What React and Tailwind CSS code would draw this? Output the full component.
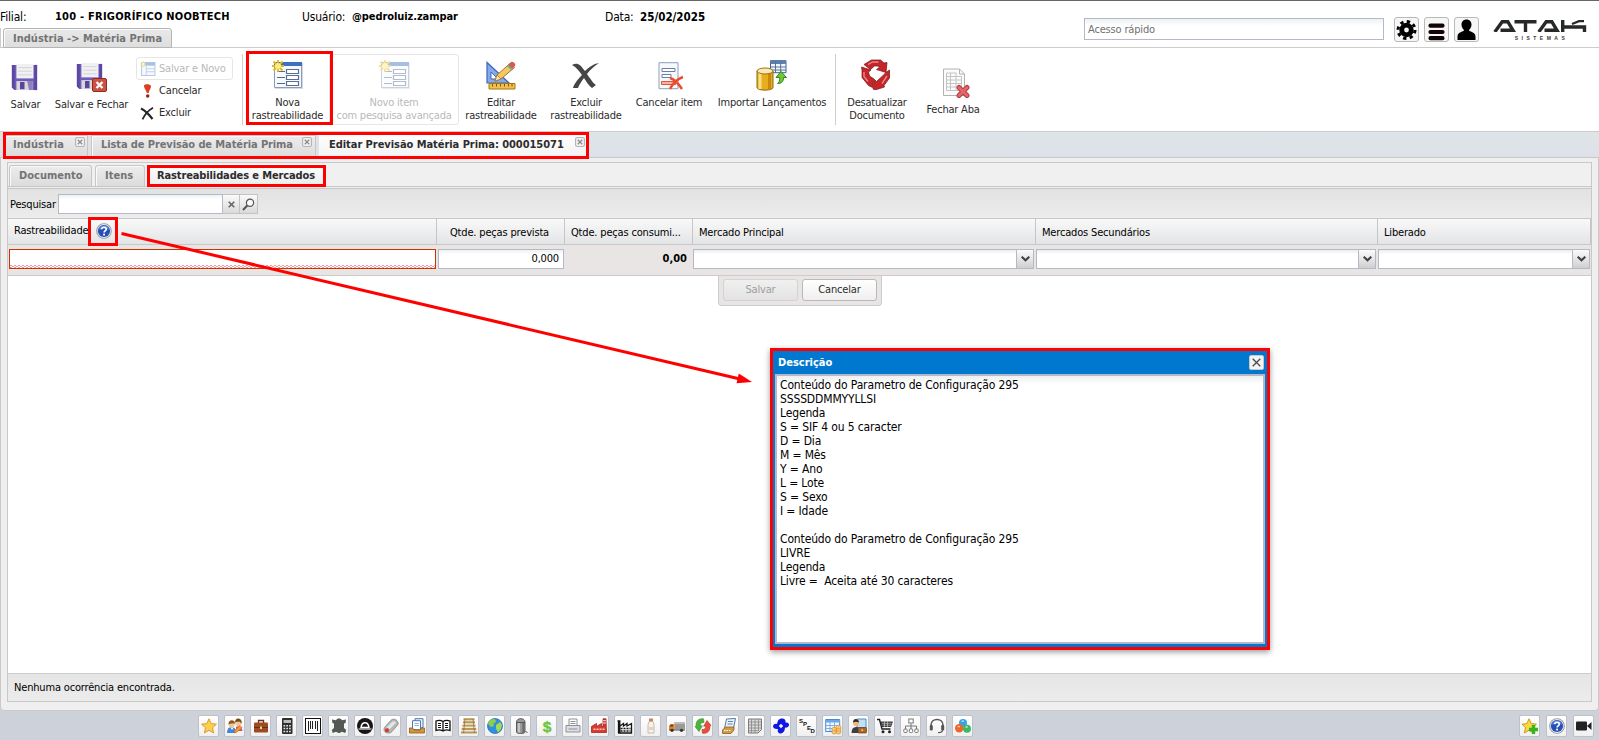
const Floppy = () => (
  <g>
    <path d="M1 1h28v28H4l-3-3z" fill="#6f5bb8" />
    <path d="M1 1h3v28l-3-3z" fill="#5a479f" />
    <path d="M26 1h3v28h-3z" fill="#5a479f" />
    <path d="M6 0h19v16H6z" fill="#f1f1f3" />
    <path d="M8 4h15M8 8h15M8 12h15" stroke="#cfcfd6" />
    <path d="M6 19h18v10H6z" fill="#d8d8dc" />
    <path d="M10 20h5v8h-5z" fill="#57469a" />
    <path d="M18 19h6v10h-4z" fill="#8d80bd" />
  </g>
);

const Burst = () => (
  <g>
    <path d="M6 0v12M0 6h12M1.500 1.500l9 9M10.500 1.500l-9 9" stroke="#e5b51c" strokeWidth="1.800" />
    <circle cx="6" cy="6" r="3" fill="#fdee7c" />
  </g>
);

const FormNew = () => (
  <svg className="h-[31px] w-[31px]" viewBox="0 0 31 31" fill="none">
    <path d="M3 3h28v26H3z" fill="#d5d9e0" />
    <path d="M2.500 2.500h27v25h-27z" fill="#f6f9fd" stroke="#8a9bb8" />
    <path d="M2 2h28v4H2z" fill="#3d6fc4" />
    <path d="M5 11.500h8M5 17.500h8M5 23.500h8" stroke="#5a6884" strokeWidth="1.200" />
    <path d="M14.500 9.500h12v4h-12zM14.500 15.500h12v4h-12zM14.500 21.500h12v4h-12z" fill="#fff" stroke="#5a6d96" strokeWidth="1.200" />
    <Burst />
  </svg>
);

function Tool({ w, label, label2, children, off, pad = "pt-[6px]" }) {
  return (
    <div className={`flex shrink-0 flex-col items-center tracking-[-0.21px] ${w} ${pad} ${off ? "text-[#b9b9b9]" : "text-[#2b2b2b]"}`}>
      <div className={`flex h-[31px] items-center justify-center ${off ? "opacity-45" : ""}`}>{children}</div>
      <div className="mt-[5px] text-center leading-[13px]">
        <div>{label}</div>
        {label2 && <div>{label2}</div>}
      </div>
    </div>
  );
}

function TabClose() {
  return (
    <svg className="h-[10px] w-[10px]" viewBox="0 0 9 9" fill="none">
      <rect x=".5" y=".5" width="8" height="8" rx="1.500" fill="#f1f1f1" stroke="#b4b4b4" />
      <path d="M2.500 2.500l4 4M6.500 2.500l-4 4" stroke="#8b8b8b" strokeWidth="1.100" />
    </svg>
  );
}

function HeaderBtn({ children }) {
  return (
    <div className="flex h-[25px] w-[25px] items-center justify-center rounded-[3px] border border-[#b9b9b9] bg-[#f6f6f6]">
      <svg className="h-[23px] w-[23px]" viewBox="0 0 23 23">{children}</svg>
    </div>
  );
}

function Combo({ w }) {
  return (
    <div className={`flex h-[20px] shrink-0 border border-[#b5b8c8] bg-white bg-linear-to-b from-[#e9eef0] to-white to-25% ${w}`}>
      <div className="flex-1" />
      <div className="flex w-[17px] items-center justify-center border-l border-[#b5b8c8] bg-linear-to-b from-[#fbfbfb] to-[#cfcfcf]">
        <svg className="h-[6px] w-[9px]" viewBox="0 0 9 6" fill="none"><path d="M.7.700L4.500 4.300 8.300.700" stroke="#3f3f3f" strokeWidth="2" /></svg>
      </div>
    </div>
  );
}

const Help = () => (
  <g>
    <circle cx="8" cy="8" r="7.800" fill="#8f959f" />
    <circle cx="8" cy="8" r="6.900" fill="#e3e7ee" />
    <circle cx="8" cy="8" r="6.100" fill="#2450b5" />
    <path d="M3 7a5 4.500 0 0 1 10 0c-3-2-7-2-10 0z" fill="#5b83dc" />
    <path d="M5.700 6.200c.2-2.600 4.700-2.600 4.600 0 0 1.500-2.200 1.500-2.200 3.200" stroke="#fff" strokeWidth="1.700" fill="none" />
    <circle cx="8.050" cy="11.600" r="1.050" fill="#fff" />
  </g>
);

const dock = [
  /* favourites */
  <path d="M8 .8l2.200 4.800 5.200.6-3.900 3.500 1.100 5.200L8 12.300l-4.600 2.600 1.100-5.200L.6 6.200l5.200-.6z" fill="#fbd04c" stroke="#dd9a2f" />,
  /* people */
  <g><path d="M0 15c0-4 1.500-6 4.500-6s4.500 2 4.500 6z" fill="#3f87d8" /><path d="M3.500 9.500L5 12l1.500-2.500z" fill="#fff" /><circle cx="4.700" cy="6.500" r="3" fill="#f2c896" /><path d="M1.500 6.500c-.5-5.500 6.500-5.500 6.500-1-2 0-4-.5-6.500 1z" fill="#8a5a1c" /><path d="M9 9c2-1.500 6-.5 6.500 4H9z" fill="#d64a8c" /><circle cx="11.300" cy="4.800" r="3.200" fill="#f2c896" /><path d="M8 4.500C8-1 14.800-.5 14.800 5c-1 1-1.300-1-1.800-1.500-1.500.5-4-.5-5 1z" fill="#754713" /><path d="M7 15l1-3 5-4.500 2.200 2.200L10 14z" fill="#f39a2c" stroke="#c2661a" strokeWidth=".6" /></g>,
  /* briefcase */
  <g><path d="M5.500 5V2.500h5V5" stroke="#6b2f14" strokeWidth="1.300" fill="none" /><rect x="1" y="4.500" width="14" height="10" rx="1.200" fill="#9b4a22" /><path d="M1 9.500h14" stroke="#6b2b10" /><rect x="7" y="8.500" width="2" height="2.500" fill="#f2d38c" /></g>,
  /* calculator */
  <g><rect x="3" y="0" width="10.500" height="16" rx="1" fill="#2f2f2f" /><path d="M4.500 2h7.500v3H4.500z" fill="#b9bdb9" /><path d="M4.500 7.800h7.500M4.500 10.600h7.500M4.500 13.400h7.500" stroke="#e4e4e4" strokeWidth="1.500" strokeDasharray="1.700 1.100" /></g>,
  /* barcode */
  <g><rect x=".5" y=".5" width="15" height="15" fill="#fff" stroke="#111" /><path d="M3.500 3v10M5.500 3v8M7.500 3v8M10.500 3v8M12.500 3v10" stroke="#222" /></g>,
  /* hide */
  <path d="M1 1.500l4 .8C6 0 10 0 11 2.300l4-.8-.4 3.500-1.600.5V10l2.200 2-.9 3-3.300-1.200L8.500 15h-1L5 13.800 1.700 15l-.9-3L3 10V5.500L1.400 5z" fill="#555953" />,
  /* round mark */
  <g><circle cx="8" cy="8" r="8" fill="#161616" /><path d="M4 9.500C4.500 6.500 6 4.800 8 4.800s3.500 1.700 4 4.700z" stroke="#fff" strokeWidth="1.500" /><path d="M1.500 11h13" stroke="#fff" strokeWidth="1" /></g>,
  /* mouse */
  <g><path d="M1.500 9.500L8 2.200C10.500-.2 16 2 15 6.500L9 13.500c-3 3.500-10 .8-7.500-4z" fill="#b5b7b7" stroke="#858787" strokeWidth=".8" /><path d="M3.500 9.500L9 4c1.800-1.500 4-.8 3.800 1L7 11z" fill="#e3e4e4" /><circle cx="4" cy="12.300" r="2" fill="#e03524" /></g>,
  /* tray of documents */
  <g><path d="M6 .7h8v9H6z" fill="#eaf2fc" stroke="#4c77b2" /><path d="M3.500 2.700h8v9h-8z" fill="#fff" stroke="#4c77b2" /><path d="M5.500 5.500h4.500M5.500 7.500h4.500" stroke="#8fb0dc" /><path d="M.5 10h3l1.500 2h6l1.500-2h3v5H.5z" fill="#d3943c" stroke="#8f5d1a" strokeWidth=".8" /></g>,
  /* book */
  <g><path d="M8 3.500C6 2.300 3 2.300 1 3v9.500c2-.7 5-.7 7 .5 2-1.200 5-1.200 7-.5V3c-2-.7-5-.7-7 .5zM8 3.500V13" fill="#fff" stroke="#111" strokeWidth="1.300" /><path d="M3 5.500h3M3 7.500h3M3 9.500h3M10 5.500h3M10 7.500h3M10 9.500h3" stroke="#111" /></g>,
  /* pallet */
  <g><path d="M3 0h10l3 15H0z" fill="#f1e8d4" /><path d="M2.500 1.300h11M2 4.300h12M1.500 7.600h13M.7 11h14.600M0 14.500h16" stroke="#b9965a" strokeWidth="1.900" /><path d="M4 1L2.500 15M12 1l1.500 14" stroke="#8d6b34" strokeWidth=".7" /></g>,
  /* globe */
  <g><circle cx="8" cy="8" r="7.500" fill="#2f8fe0" stroke="#2a6fae" strokeWidth=".8" /><path d="M2 3.500C4 .8 7 .5 8.500 1.500L9 4 6.500 5.500 7 8 4 9 1 6z" fill="#8ed04a" /><path d="M9 7l4-3 2 3-1 4-3 3.500-2-4z" fill="#a2dc52" /></g>,
  /* silo */
  <g><path d="M3.500 4C3.500-.5 12-.5 12 4v10c0 2-8.500 2-8.500 0z" fill="#9a9a9a" stroke="#4f4f4f" strokeWidth=".9" /><path d="M6 4.500V14.500" stroke="#d3d3d3" strokeWidth="1.500" /><path d="M10.300 4.500V15" stroke="#6a6a6a" strokeWidth="1.800" /><path d="M3.500 4.500h8.500M12.500 13.500l2 1" stroke="#555" /></g>,
  /* dollar */
  <text x="8" y="13.500" textAnchor="middle" fontSize="15.500" fontWeight="700" fill="#6cc63a" stroke="#6cc63a" strokeWidth=".4">$</text>,
  /* printer */
  <g><path d="M4 1h8v7H4z" fill="#fff" stroke="#8d9196" /><path d="M1 7.500h14V14H1z" fill="#dcdfe2" stroke="#8d9196" /><path d="M5.500 3.500h5M5.500 5.500h5M3.500 11h9" stroke="#8d9196" /></g>,
  /* red factory */
  <g><path d="M.5 14.500V8.500l5-3v3l5-3v3h1.500V.8h3l.5 13.700z" fill="#db3a2e" stroke="#8f1b14" strokeWidth=".7" /><path d="M2.500 11.200h11" stroke="#ffc8bf" strokeWidth="1.500" strokeDasharray="2 1" /><path d="M12 2.700h3M12 5h3" stroke="#ffd9d4" /></g>,
  /* black factory */
  <g><path d="M1.500 15V2.500M.5 3h2.300v12M3 8l3.500-2.500V8L10 5.500V8l4.500-2.500V15H1" stroke="#151515" strokeWidth="1.300" /><path d="M3.500 10.500h10M3.500 13h10" stroke="#151515" strokeWidth="1.300" strokeDasharray="2 1" /></g>,
  /* bottle */
  <g><path d="M6 .5h4v3H6z" fill="#c98263" /><path d="M6 3.500h4l1 3V15H5V6.500z" fill="#f6f1ea" stroke="#c0ab9b" strokeWidth=".8" /><path d="M6 9h4v3H6z" fill="#e2d3c3" /></g>,
  /* truck */
  <g><path d="M5.500 4H16v7.500H5.500z" fill="#9a9a9a" /><path d="M5.500 4H16v2H5.500z" fill="#bcbcbc" /><path d="M0 12V8l1.500-2h4v6z" fill="#ef7d1a" /><path d="M.8 8.500l1-1.800H4v1.800z" fill="#3d4a58" /><path d="M0 12h16" stroke="#555" /><circle cx="3" cy="12.300" r="1.600" fill="#333" /><circle cx="12.500" cy="12.300" r="1.600" fill="#333" /></g>,
  /* sync */
  <g><path d="M8.500.8C3.500 0 .5 3.500 1.200 8L0 8.500l4 5 3.300-5.700-2 .2C5 5.500 6.500 4 9 4.500z" fill="#4db53c" stroke="#2d8a28" strokeWidth=".6" /><path d="M7.500 15.200c5 .8 8-2.700 7.300-7.200l1.200-.5-4-5-3.300 5.700 2-.2c.3 2.500-1.200 4-3.700 3.500z" fill="#e9503a" stroke="#b02b1e" strokeWidth=".6" /></g>,
  /* payment terminal */
  <g><path d="M5.500 1l9-.5-2 9.500-9 .5z" fill="#e9f1fa" stroke="#55789f" /><path d="M7 3.500h5M6.500 6h5" stroke="#5b85bb" /><path d="M1.500 12l3-3h8.500v3L10 15.500H1.500z" fill="#d39a45" stroke="#8d5f1c" strokeWidth=".8" /><path d="M3 12.500h7" stroke="#fff" strokeDasharray="1.500 1" /></g>,
  /* spreadsheet */
  <g><path d="M1.500 1h13v10.500l-3.500 3.500H1.500z" fill="#dcdcdc" stroke="#777" /><path d="M1 4h13M1 7h13M1 10h13M1 12.700h11M4.500 1v14M8 1v14M11.500 1v12" stroke="#8c8c8c" strokeWidth=".9" /></g>,
  /* blue pinwheel */
  <path d="M8 0.500c3-.5 5 1 4.500 4 2.500-.5 4 1 3.500 3-.5 1.500-2.500 2.500-4 2 0 3-1.500 5.500-4 6-2.500 0-4-2-3-4.500C2 11.500 0 10 0 8c.5-2 2.500-2.500 4-2 .5-3 1.500-5 4-5.500zM8 5.800L5.800 8 8 10.200 10.200 8z" fill="#1016e6" fillRule="evenodd" />,
  /* sped */
  <g fontSize="6" fontWeight="700" fill="#111"><text x="0" y="4.500">S</text><text x="4" y="8">P</text><text x="8" y="11.500">E</text><text x="11.500" y="15">D</text></g>,
  /* table with coins */
  <g><path d="M.7 1.500h14v12h-14z" fill="#f3f8ff" stroke="#4688d4" /><path d="M1 2h14v2.500H1z" fill="#6aa8ea" /><path d="M1 7.500h13M1 10.500h13M5 4v9M9.500 4v9" stroke="#7daee6" /><path d="M7 10.500c0-1.700 4.300-1.700 4.300 0V15c0 1.300-4.300 1.300-4.300 0zM11.300 8.500c0-1.700 4.500-1.700 4.500 0V15c0 1.300-4.500 1.300-4.500 0z" fill="#f9c673" stroke="#d3933a" strokeWidth=".7" /><path d="M7 12.700h4.300M11.300 10.700h4.500M11.300 13h4.500" stroke="#d3933a" strokeWidth=".6" /></g>,
  /* clerk */
  <g><path d="M6 1h9v9H6z" fill="#bfe0f7" stroke="#4a92c8" /><circle cx="5" cy="5" r="3" fill="#edb77f" /><path d="M2 4.500c0-5 6-4.500 6 0-2-1-4-1-6 0z" fill="#3b2a1a" /><path d="M.5 15C.5 11 2 9 5 9s4 2 4 6z" fill="#3d3d45" /><rect x="7" y="9.500" width="8.500" height="5.500" rx=".8" fill="#a9652a" stroke="#6b3a10" strokeWidth=".7" /><path d="M10.500 11.500h1.500v1.500h-1.500z" fill="#ffe2a8" /></g>,
  /* cart */
  <g><path d="M0 1.500h2.500L5 11h8.500" stroke="#222" strokeWidth="1.400" fill="none" /><path d="M3.500 3.500H16l-2 5.500H5z" fill="#3c3c3c" /><path d="M5 5.300h9.500M5.500 7.200h8.500M7.500 3.500v5.500M10.500 3.500v5.500" stroke="#eee" strokeWidth=".5" /><circle cx="6" cy="13.700" r="1.500" fill="#222" /><circle cx="12.500" cy="13.700" r="1.500" fill="#222" /></g>,
  /* hierarchy */
  <g fill="#fff" stroke="#777"><path d="M8 5.500V8M2.500 11V8h11v3M8 8v3" fill="none" /><rect x="5.800" y="1" width="4.400" height="4" /><rect x=".8" y="11" width="3.400" height="3.500" rx="1" /><rect x="6.300" y="11" width="3.400" height="3.500" rx="1" /><rect x="11.800" y="11" width="3.400" height="3.500" rx="1" /></g>,
  /* headset */
  <g><path d="M2 9V7c0-7.500 12-7.500 12 0v2" stroke="#555" strokeWidth="1.500" fill="none" /><rect x=".8" y="7" width="3" height="5.500" rx="1.300" fill="#555" /><rect x="12.200" y="7" width="3" height="5.500" rx="1.300" fill="#555" /><path d="M13.500 12c0 2-2 2.700-4.500 2.700" stroke="#555" strokeWidth="1.200" fill="none" /></g>,
  /* spheres */
  <g><circle cx="8" cy="5" r="4" fill="#35a4e4" /><circle cx="4.200" cy="10.300" r="4.200" fill="#f0652d" /><circle cx="12" cy="10.800" r="4" fill="#3fb760" /><path d="M6.500 3.200h2.500M2.700 8.700h2.200M10.500 9h2.200" stroke="#fff" strokeOpacity=".7" strokeWidth="1.300" /></g>,
];

function DockBtn({ children }) {
  return (
    <div className="flex h-[22px] w-[21px] shrink-0 items-center justify-center rounded-[2px] border border-[#c0c1c4] bg-linear-to-b from-white to-[#f0f0f0]">
      <svg className="h-[16px] w-[16px] shrink-0 overflow-visible font-['Liberation_Sans',sans-serif] tracking-normal" viewBox="0 0 16 16" fill="none">{children}</svg>
    </div>
  );
}

const description = `Conteúdo do Parametro de Configuração 295
SSSSDDMMYYLLSI
Legenda
S = SIF 4 ou 5 caracter
D = Dia
M = Mês
Y = Ano
L = Lote
S = Sexo
I = Idade

Conteúdo do Parametro de Configuração 295
LIVRE
Legenda
Livre =  Aceita até 30 caracteres`;

const offTab = "flex shrink-0 border border-b-0 border-[#c6c6c6] bg-linear-to-b from-[#ececec] to-[#dcdcdc] text-[#747474] shadow-[inset_1px_1px_0_#fafafa]";

export default function App() {
  return (
    <div className="relative flex h-[740px] w-[1599px] flex-col overflow-hidden whitespace-nowrap bg-white font-['DejaVu_Sans_Condensed','DejaVu_Sans',sans-serif] text-[11px] leading-[14px] tracking-[-0.17px] text-black">
      {/* Header */}
      <header className="flex h-[48px] shrink-0 border-t border-[#666666] bg-linear-to-b from-white from-[46px] to-[#cccccc] to-[46px]">
        <div className="flex w-[1084px] flex-col">
          <div className="flex h-[27px] items-center pt-[5px] text-[12px]">
            <div className="w-[55px]">Filial:</div>
            <div className="w-[247px] text-[11px] font-bold tracking-[0.23px]">100 - FRIGORÍFICO NOOBTECH</div>
            <div className="w-[50px]">Usuário:</div>
            <div className="w-[253px] text-[11px] font-bold tracking-[-0.08px]">@pedroluiz.zampar</div>
            <div className="w-[35px]">Data:</div>
            <div className="text-[11.500px] font-bold tracking-[0px]">25/02/2025</div>
          </div>
          <div className="flex h-[20px] border-l border-[#cccccc] pl-[2px]">
            <div className="flex h-[20px] w-[169px] items-center rounded-t-[3px] border border-[#b5b5b5] bg-linear-to-b from-[#e9e9e9] to-[#dedede] pt-[2px] pl-[9px] font-bold tracking-[0.02px] text-[#747474] shadow-[inset_1px_1px_0_#fafafa]">Indústria -&gt; Matéria Prima</div>
          </div>
        </div>
        <div className="mt-[17px] flex h-[22px] w-[300px] items-center border border-[#b5b8c8] bg-linear-to-b from-[#eef2f2] to-white to-35% pt-[1px] pl-[3px] text-[#707070]">Acesso rápido</div>
        <div className="mt-[16px] ml-[10px] flex gap-[5px]">
          <HeaderBtn>
            <circle cx="11.500" cy="12" r="4.800" fill="none" stroke="#000" strokeWidth="4.800" />
            <circle cx="11.500" cy="12" r="8.500" fill="none" stroke="#000" strokeWidth="3" strokeDasharray="3.340 3.340" />
          </HeaderBtn>
          <HeaderBtn><path d="M5.500 7.700h12M5.500 14h12M5.500 20.200h12" stroke="#120404" strokeWidth="4.200" strokeLinecap="round" /></HeaderBtn>
          <HeaderBtn><path d="M11.500 1.500c3.200 0 5 2.300 5 5 0 2.500-1.200 4.500-2.500 5.500 0 2 6.500 1.500 6.500 6.500v3.500h-18v-3.500c0-5 6.500-4.500 6.500-6.500-1.300-1-2.500-3-2.500-5.500 0-2.700 1.800-5 5-5z" fill="#000" /></HeaderBtn>
        </div>
        <div className="mt-[19px] ml-[14px] flex h-[21px] w-[94px] flex-col items-center">
          <svg className="h-[12px] w-[94px]" viewBox="0 0 94 12" fill="none" stroke="#262829" strokeWidth="3.400">
            <path d="M1.800 12L9.200 1.700h5.600L20 10.300H7.500M21.500 1.700h22M32.500 2v10M45.800 12L53.200 1.700h5.600L64 10.300H51.500M69.700 0v12M69.700 7H91.500V12" />
            <path d="M79 4l7-2.800h5" strokeWidth="2.200" />
          </svg>
          <div className="mt-[3px] pl-[3px] font-['Liberation_Sans',sans-serif] text-[5px] leading-[6px] font-bold tracking-[3.500px] text-[#3b3b3b]">SISTEMAS</div>
        </div>
      </header>

      {/* Ribbon */}
      <section className="flex h-[83px] shrink-0 bg-white pt-[6px]">
        <Tool w="w-[51px]" pad="pt-[8px]" label="Salvar"><svg className="h-[27px] w-[27px] -translate-x-[1px]" viewBox="0 0 30 30"><Floppy /></svg></Tool>
        <Tool w="w-[81px]" pad="pt-[8px]" label="Salvar e Fechar">
          <svg className="h-[31px] w-[33px] translate-x-[1px] translate-y-[1px]" viewBox="0 0 33 31" fill="none">
            <g transform="scale(.9)"><Floppy /></g>
            <rect x="16.500" y="15.500" width="14" height="13" rx="1.500" fill="#cc5142" stroke="#8e2c22" />
            <path d="M20.500 19l6 6M26.500 19l-6 6" stroke="#fff" strokeWidth="2.300" />
          </svg>
        </Tool>
        <div className="ml-[4px] flex w-[97px] shrink-0 flex-col pt-[3px] text-[#2b2b2b]">
          <div className="flex h-[23px] items-center rounded-[3px] border border-[#e6e6e6] pl-[3px] text-[#b9b9b9]">
            <svg className="h-[16px] w-[16px] opacity-50" viewBox="0 0 31 31" fill="none"><path d="M3 3h26v25H3z" fill="#eef4fc" stroke="#6f95cf" strokeWidth="2" /><path d="M3 3h26v6H3z" fill="#4d80cf" /><path d="M12 9v19M12 15h17M12 21h17" stroke="#89aada" strokeWidth="2" /><Burst /></svg>
            <span className="ml-[3px]">Salvar e Novo</span>
          </div>
          <div className="flex h-[22px] items-center pl-[7px]">
            <svg className="h-[14px] w-[9px]" viewBox="0 0 9 14"><path d="M1 1.500C2-.3 7.500-.2 8 2.200 8.200 4 6 6.500 5.600 9H3.800C3.500 6.500.7 4 1 1.500z" fill="#df3d24" /><circle cx="4.700" cy="12" r="1.800" fill="#9d2313" /></svg>
            <span className="ml-[7px]">Cancelar</span>
          </div>
          <div className="flex h-[22px] items-center pl-[4px]">
            <svg className="h-[13px] w-[14px]" viewBox="0 0 14 13" fill="none" stroke="#262626"><path d="M1 1.500c4 2 8 6 11.500 10.500" strokeWidth="2.200" /><path d="M13 .7C9 3 5 7 2.500 12.300" strokeWidth="1.700" /></svg>
            <span className="ml-[5px]">Excluir</span>
          </div>
        </div>
        <div className="ml-[9px] h-[71px] w-px bg-[#cfcfcf]" />
        <Tool w="ml-[3px] w-[83px]" label="Nova" label2="rastreabilidade"><FormNew /></Tool>
        <div className="flex h-[71px] w-[130px] shrink-0 justify-center rounded-[3px] border border-[#e6e6e6]">
          <Tool w="w-[128px]" pad="pt-[5px]" off label="Novo item" label2="com pesquisa avançada"><FormNew /></Tool>
        </div>
        <Tool w="w-[84px]" label="Editar" label2="rastreabilidade">
          <svg className="h-[29px] w-[30px]" viewBox="0 0 30 29" fill="none">
            <path d="M1 1.500V22h22z" fill="#86a9ea" stroke="#3f67be" strokeWidth="1.200" /><path d="M5 11v7h7z" fill="#fff" stroke="#3f67be" />
            <path d="M3 22.500h26v5.500H3z" fill="#f1c14a" stroke="#a87613" /><path d="M6.500 23v2.500M10.500 23v2.500M14.500 23v2.500M18.500 23v2.500M22.500 23v2.500M26 23v2.500" stroke="#7d5710" />
            <path d="M9 20l2-6L24 2.500l4.500 4L15 18z" fill="#f7c765" stroke="#a57222" /><path d="M9 20l2-6 4 4z" fill="#f7e5c4" stroke="#a57222" strokeWidth=".8" /><path d="M22 4l3-3c2-1 5.500 2 4 4l-3 3z" fill="#d65b57" /><path d="M21.500 4.500l4.500 4" stroke="#6fb17a" strokeWidth="2" />
          </svg>
        </Tool>
        <Tool w="w-[86px]" label="Excluir" label2="rastreabilidade">
          <svg className="h-[27px] w-[28px]" viewBox="0 0 28 27"><path d="M0 3C5 0 8 2 13 9 17 5 21 2 27 1c-5 3-9 7-12 11 4 6 7 10 9 11l-4 3c-3-2-6-7-8-10-3 4-5 7-6 10H1c1-4 5-9 9-13C7 9 4 5 0 3z" fill="#454545" /></svg>
        </Tool>
        <Tool w="w-[80px]" label="Cancelar item">
          <svg className="h-[29px] w-[26px] translate-x-[2px] translate-y-[1px]" viewBox="0 0 26 29" fill="none">
            <path d="M1 .700h19v26H1z" fill="#f5f8fc" stroke="#8da0bc" /><path d="M4 6.500h13v3H4zM4 12.500h9v3H4z" fill="#fff" stroke="#6a7fa3" /><path d="M3.500 19.500h14v3h-14z" fill="#f9b2a4" stroke="#e5502f" />
            <path d="M12 16c4 1 8 5 12 11M25 15c-6 2-10 6-13 12" stroke="#ea4d2e" strokeWidth="2.500" />
          </svg>
        </Tool>
        <Tool w="w-[126px]" label="Importar Lançamentos">
          <svg className="h-[31px] w-[31px] -translate-x-[1px]" viewBox="0 0 31 31" fill="none">
            <path d="M14.500.700h15.500v12H14.500z" fill="#f5f9ff" stroke="#3f618f" /><path d="M14.500 1h15.500v3H14.500z" fill="#5c80b3" /><path d="M14.500 7h15.500M14.500 10h15.500M19.500 1v12M24.700 1v12" stroke="#567399" />
            <path d="M1 11v16.500c0 3.500 16 3.500 16 0V11z" fill="#e8ae1f" stroke="#8d660c" /><path d="M4 12v17" stroke="#fbe08a" strokeWidth="3" /><path d="M13.500 12v17.500" stroke="#c58b10" strokeWidth="3" /><ellipse cx="9" cy="11" rx="8" ry="3" fill="#fbe9b4" stroke="#9b7419" />
            <path d="M25 11.500l5.500 6h-3c0 4-2 6-6 6 2-1.500 2.200-3 2.200-6h-3.700z" fill="#6ecb35" stroke="#2d8418" />
          </svg>
        </Tool>
        <div className="h-[71px] w-px bg-[#cfcfcf]" />
        <Tool w="w-[82px]" pad="pt-[6px]" label="Desatualizar" label2="Documento">
          <svg className="h-[31px] w-[29px] -translate-x-[2px] -translate-y-[1px]" viewBox="0 0 29 31">
            <g fill="#c4262a" stroke="#7c1014" strokeWidth=".7">
              <path d="M3 5.500L10.500 1h9L23 4l3-.5-1 10-9.500-3 3-2.300L17 7h-3.500l-4 3.500z" />
              <path d="M25 13.500l3.500-2.500v8l-5.500 7.500.5 1.500-9.500 3-2-1 1.500-9.500 2 2 6-5.500z" />
              <path d="M.5 8l9.500 3-2.500 2 1 4 4.500 3-1.500 8.500-4-2L1 18.500V11z" />
            </g>
            <path d="M7 5.500l4.500-2.500h6M3 13v4.500l4 5M26 17l-5 7.500" stroke="#e98886" strokeWidth="1.400" fill="none" />
          </svg>
        </Tool>
        <Tool w="w-[70px]" pad="pt-[13px]" label="Fechar Aba">
          <svg className="h-[30px] w-[28px] translate-x-[3px]" viewBox="0 0 28 30" fill="none">
            <path d="M1.500 1h16l5 5v21.500h-21z" fill="#fbfbfb" stroke="#b2b2b2" /><path d="M17.500 1v5h5" stroke="#b2b2b2" /><path d="M4.500 5v17.500h15V8.500M4.500 8.500h15M4.500 12h15M4.500 15.500h15M4.500 19h15M8.500 5v17.500M14 5v17.500M4.500 5h10" stroke="#c4c4c4" />
            <path d="M17 19.500l8 8M25 19.500l-8 8" stroke="#b83a40" strokeWidth="5" strokeLinecap="round" /><path d="M17 19.500l8 8M25 19.500l-8 8" stroke="#e0686b" strokeWidth="3" strokeLinecap="round" />
          </svg>
        </Tool>
      </section>

      {/* Document tabs */}
      <nav className="flex h-[26px] shrink-0 items-end border-t border-[#cccccc] bg-linear-to-b from-[#dfe4e9] to-[#dde2e8] pl-[3px] font-bold">
        <div className={`${offTab} h-[22px] w-[85px] pt-[2px] pl-[9px] tracking-[0.050px]`}>Indústria<span className="-mt-[1px] ml-[11px]"><TabClose /></span></div>
        <div className={`${offTab} ml-[3px] h-[22px] w-[225px] pt-[2px] pl-[9px] tracking-[-0.1px]`}>Lista de Previsão de Matéria Prima<span className="-mt-[1px] ml-[9px]"><TabClose /></span></div>
        <div className="ml-[3px] flex h-[22px] w-[270px] bg-linear-to-b from-white to-[#f2f2f2] pt-[3px] pl-[10px] tracking-[-0.05px] text-[#2c2c2c]">Editar Previsão Matéria Prima: 000015071<span className="-mt-[1px] ml-[11px]"><TabClose /></span></div>
      </nav>

      {/* Workspace */}
      <main className="flex h-[554px] shrink-0 bg-[#cdd2da]">
        <div className="flex w-full flex-col rounded-b-[4px] border border-[#c9c9c9] bg-[#efefef] px-[6px] pt-[4px] pb-[8px]">
          <div className="flex h-[541px] flex-col border border-[#c8c8c8]">
            <div className="flex h-[23px] items-end bg-[#f0f0f0] pl-[1px] font-bold">
              <div className={`${offTab} h-[21px] w-[83px] items-center rounded-t-[3px] pl-[9px] tracking-[0]`}>Documento</div>
              <div className={`${offTab} ml-[3px] h-[21px] w-[50px] items-center rounded-t-[3px] pl-[9px] tracking-[0]`}>Itens</div>
              <div className="ml-[3px] flex h-[22px] w-[178px] items-center bg-white bg-linear-to-b from-white to-[#ececec] pt-[1px] pl-[9px] tracking-[-0.12px] text-[#2c2c2c]">Rastreabilidades e Mercados</div>
            </div>
            <div className="h-[3px] border-y border-[#c8c8c8] bg-[#ececec]" />
            <div className="flex h-[29px] items-start bg-linear-to-b from-[#e2e2e2] to-[#ececec] pt-[5px] pl-[2px]">
              <span className="w-[48px] pt-[4px]">Pesquisar</span>
              <div className="h-[20px] w-[165px] border border-[#b5b8c8] bg-linear-to-b from-[#eef2f2] to-white to-25%" />
              <div className="flex h-[20px] w-[17px] items-center justify-center border-y border-r border-[#c3c3c3] bg-linear-to-b from-[#fafafa] to-[#dadada]">
                <svg className="h-[7px] w-[7px]" viewBox="0 0 7 7"><path d="M.7.700l5.600 5.600M6.300.700L.7 6.300" stroke="#666" strokeWidth="1.600" /></svg>
              </div>
              <div className="flex h-[20px] w-[18px] items-center justify-center border-y border-r border-[#c3c3c3] bg-linear-to-b from-[#fafafa] to-[#dadada]">
                <svg className="h-[13px] w-[13px]" viewBox="0 0 13 13" fill="none" stroke="#555"><circle cx="8" cy="4.800" r="3.600" fill="#fdfdfd" strokeWidth="1.200" /><path d="M5.300 7.500L1 12" strokeWidth="2" /></svg>
              </div>
            </div>
            <div className="flex h-[27px] border-y border-[#c8c8c8] bg-linear-to-b from-[#f9f9f9] to-[#e3e4e6]">
              <div className="flex w-[429px] shrink-0 border-r border-[#c5c5c5] pt-[5px] pl-[6px] leading-[14px]">
                Rastreabilidade
                <svg className="-mt-[1px] ml-[8px] h-[16px] w-[16px]" viewBox="0 0 16 16"><Help /></svg>
              </div>
              <div className="flex w-[128px] shrink-0 items-center border-r border-[#c5c5c5] pt-[2px] pl-[13px]">Qtde. peças prevista</div>
              <div className="flex w-[128px] shrink-0 items-center border-r border-[#c5c5c5] pt-[2px] pl-[6px]">Qtde. peças consumi...</div>
              <div className="flex w-[343px] shrink-0 items-center border-r border-[#c5c5c5] pt-[2px] pl-[6px]">Mercado Principal</div>
              <div className="flex w-[342px] shrink-0 items-center border-r border-[#c5c5c5] pt-[2px] pl-[6px]">Mercados Secundários</div>
              <div className="flex w-[213px] shrink-0 items-center border-r border-[#c5c5c5] pt-[2px] pl-[6px]">Liberado</div>
            </div>
            <div className="flex h-[31px] items-start border-b border-[#cccccc] bg-[#e9e5e4] pt-[4px] pl-[1px]">
              <div className="flex h-[20px] w-[427px] shrink-0 flex-col justify-end border border-[#cc3300] bg-white">
                <svg className="h-[3px] w-full"><path d="M0 .5h425M0 2.500h425" stroke="#f09a9a" strokeDasharray="2 2" /><path d="M2 1.500h425" stroke="#f09a9a" strokeDasharray="2 2" /></svg>
              </div>
              <div className="ml-[2px] flex h-[20px] w-[126px] shrink-0 items-center justify-end border border-[#b5b8c8] bg-linear-to-b from-[#eef2f2] to-white to-25% pr-[4px]">0,000</div>
              <div className="w-[123px] shrink-0 pt-[3px] text-right font-bold tracking-[0]">0,00</div>
              <div className="ml-[6px] flex gap-[2px]">
                <Combo w="w-[341px]" />
                <Combo w="w-[340px]" />
                <Combo w="w-[212px]" />
              </div>
            </div>
            <div className="flex min-h-0 flex-1 items-start bg-white pl-[710px]">
              <div className="flex h-[30px] w-[164px] justify-center gap-[4px] rounded-b-[4px] border border-t-0 border-[#cccccc] bg-[#e9e5e4] pt-[3px]">
                <div className="flex h-[22px] w-[75px] items-center justify-center rounded-[3px] border border-[#d3d3d3] bg-linear-to-b from-[#f1f0f0] to-[#e4e3e3] text-[#9e9e9e]">Salvar</div>
                <div className="flex h-[22px] w-[75px] items-center justify-center rounded-[3px] border border-[#b9b9b9] bg-linear-to-b from-white to-[#efefef] text-[#2c2c2c]">Cancelar</div>
              </div>
            </div>
            <div className="flex h-[28px] items-center border-t border-[#cccccc] bg-linear-to-b from-[#e5e5e5] to-[#ececec] pt-[1px] pl-[6px]">Nenhuma ocorrência encontrada.</div>
          </div>
        </div>
      </main>

      {/* Shortcut dock */}
      <footer className="flex h-[29px] shrink-0 bg-[#cdd2da] pt-[4px]">
        <div className="flex gap-[5px] pl-[198px]">{dock.map((icon, i) => <DockBtn key={i}>{icon}</DockBtn>)}</div>
        <div className="ml-auto flex gap-[6px] pr-[5px]">
          <DockBtn><path d="M7 .8l2.200 4.800 5.200.6-3.900 3.500 1.100 5.200L7 12.300l-4.600 2.600 1.100-5.200L0 6.200l4.800-.6z" fill="#fbd83c" stroke="#c79a1f" /><path d="M11.500 7v9M7 11.500h9" stroke="#35b61f" strokeWidth="3.400" /></DockBtn>
          <DockBtn><Help /></DockBtn>
          <DockBtn><rect x="0" y="3.500" width="11" height="9" rx="1" fill="#222" /><path d="M11 8l4.500-4v8z" fill="#222" /></DockBtn>
        </div>
      </footer>

      {/* Description window */}
      <div className="absolute top-[348px] left-[770px] flex h-[302px] w-[500px] flex-col border-[3px] border-[#ff0000] bg-[#0078d0] px-[2px] pb-[3px] shadow-[0_2px_6px_rgba(0,0,0,0.4)]">
        <div className="flex h-[23px] shrink-0 items-center justify-between pr-[1px] pl-[3px]">
          <span className="font-bold tracking-[0px] text-white">Descrição</span>
          <div className="flex h-[15px] w-[15px] items-center justify-center rounded-[2px] border border-[#c9c9c9] bg-[#f4f4f4]">
            <svg className="h-[9px] w-[9px]" viewBox="0 0 9 9"><path d="M.7.700l7.600 7.600M8.300.700L.7 8.300" stroke="#4a4a4a" strokeWidth="1.300" /></svg>
          </div>
        </div>
        <div className="flex-1 border-2 border-[#b5b8c8] bg-linear-to-b from-[#eceff0] to-white to-[8px] pt-[2px] pl-[3px] text-[12px] leading-[14px] tracking-[-0.14px] whitespace-pre">{description}</div>
      </div>

      {/* Annotations */}
      <div className="absolute top-[51px] left-[246px] h-[74px] w-[87px] border-[3px] border-[#ff0000]" />
      <div className="absolute top-[132px] left-[3px] h-[27px] w-[586px] border-[3px] border-[#ff0000]" />
      <div className="absolute top-[165px] left-[147px] h-[22px] w-[179px] border-[3px] border-[#ff0000]" />
      <div className="absolute top-[217px] left-[88px] h-[29px] w-[30px] border-[3px] border-[#ff0000]" />
      <svg className="absolute top-[225px] left-[115px] h-[165px] w-[645px]" viewBox="115 225 645 165"><path d="M121.500 233.500L740 379" stroke="#ff0000" strokeWidth="3" /><path d="M752 382l-15.500 1.200 2.300-9.600z" fill="#ff0000" /></svg>
    </div>
  );
}
